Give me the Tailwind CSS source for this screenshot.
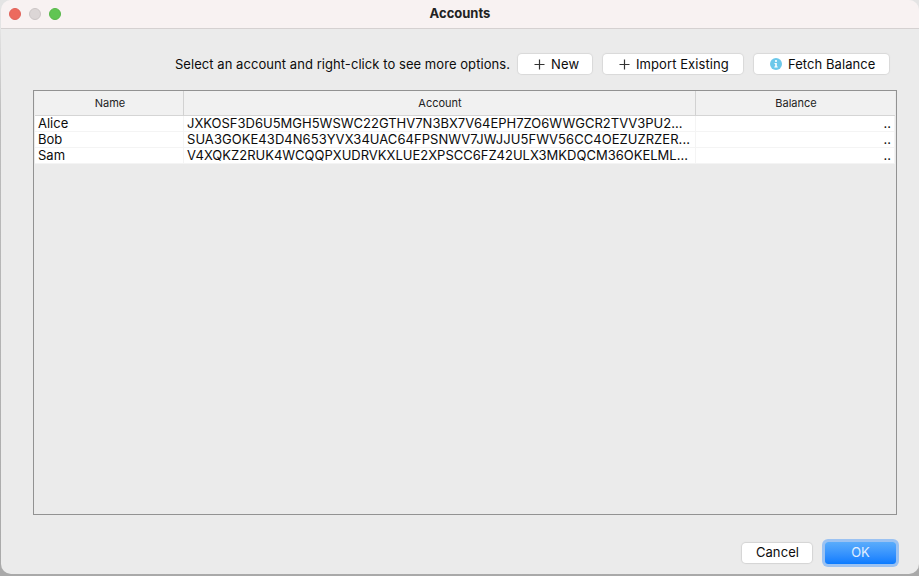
<!DOCTYPE html>
<html lang="en">
<head>
<meta charset="utf-8">
<title>Accounts</title>
<script src="https://cdn.jsdelivr.net/npm/@tailwindcss/browser@4"></script>
</head>
<body class="h-[576px] w-[919px] overflow-hidden bg-gradient-to-b from-[#e4e4e4] from-5% via-[#bdbdbd] via-20% to-[#a9a9a9] pl-px font-[Inter,sans-serif] text-[13px] text-[#0c0c0c]">
<div class="relative flex h-[574px] w-[918px] flex-col overflow-hidden rounded-[10px] bg-[#ebebeb]">
  <header class="relative flex h-[29px] shrink-0 items-center justify-center border-b border-[#d5d1d1] bg-[#f8f2f2] pb-px">
    <div class="absolute left-2 top-2 flex gap-2">
      <i class="size-3 rounded-full border border-[#e0625a] bg-[#ec6a5e]"></i>
      <i class="size-3 rounded-full border border-[#cbc5c5] bg-[#dcd6d6]"></i>
      <i class="size-3 rounded-full border border-[#57b749] bg-[#61c554]"></i>
    </div>
    <h1 class="text-[13px] font-bold text-[#222]">Accounts</h1>
  </header>
  <div class="flex h-[61px] shrink-0 items-start justify-end pr-[30px] pt-[25px] leading-5">
    <p class="mr-[8px] whitespace-nowrap tracking-[0.06px]">Select an account and right-click to see more options.</p>
    <button class="mr-[11px] flex h-5 w-[74px] items-center rounded-[4px] bg-white pl-4 whitespace-nowrap shadow-[0_0_1px_1px_#d9d9d9]">
      <svg class="mr-[6px] size-[11px]" viewBox="0 0 11 11" fill="none" stroke="#333" stroke-width="1.2"><path d="M5.5 .5v10M.5 5.5h10"/></svg><span class="tracking-[0.15px]">New</span>
    </button>
    <button class="mr-[11px] flex h-5 w-[140px] items-center rounded-[4px] bg-white pl-4 whitespace-nowrap shadow-[0_0_1px_1px_#d9d9d9]">
      <svg class="mr-[6px] size-[11px]" viewBox="0 0 11 11" fill="none" stroke="#333" stroke-width="1.2"><path d="M5.5 .5v10M.5 5.5h10"/></svg><span class="tracking-[0.08px]">Import Existing</span>
    </button>
    <button class="flex h-5 w-[135px] items-center rounded-[4px] bg-white pl-4 whitespace-nowrap shadow-[0_0_1px_1px_#d9d9d9]">
      <svg class="mr-[6px] size-3" viewBox="0 0 12 12"><circle cx="6" cy="6" r="6" fill="#6cc8ea"/><circle cx="6" cy="3" r="1.1" fill="#fff"/><path d="M4.5 5h2.3v3.5h.9v1H4.3v-1h.9V6h-.7z" fill="#fff"/></svg><span class="tracking-[0.06px]">Fetch Balance</span>
    </button>
  </div>
  <main class="ml-8 h-[425px] w-[864px] shrink-0 border border-[#929292] px-px">
    <div class="grid h-[25px] grid-cols-[149px_512px_199px] border-b border-[#d5d5d5] bg-[#f1f1f1] text-center text-[11px] leading-[25px] text-[#222]">
      <span class="border-r border-[#d2d2d2] pl-[2px]">Name</span><span class="border-r border-[#d2d2d2] pl-px">Account</span><span class="pl-px">Balance</span>
    </div>
    <div class="grid h-12 grid-cols-[149px_512px_199px] grid-rows-[16px_16px_16px] leading-[15px] whitespace-nowrap [&>span]:border-b [&>span]:border-r [&>span]:border-[#f4f4f4] [&>span]:bg-white">
      <span class="pl-[3px] tracking-[0px]">Alice</span><span class="pl-[3px] tracking-[0px]">JXKOSF3D6U5MGH5WSWC22GTHV7N3BX7V64EPH7ZO6WWGCR2TVV3PU2...</span><span class="pr-[3px] text-right leading-[14px]">..</span>
      <span class="pl-[3px] tracking-[0px]">Bob</span><span class="pl-[3px] tracking-[0.05px]">SUA3GOKE43D4N653YVX34UAC64FPSNWV7JWJJU5FWV56CC4OEZUZRZER...</span><span class="pr-[3px] text-right leading-[14px]">..</span>
      <span class="pl-[3px] tracking-[0px]">Sam</span><span class="pl-[3px] tracking-[0px]">V4XQKZ2RUK4WCQQPXUDRVKXLUE2XPSCC6FZ42ULX3MKDQCM36OKELML...</span><span class="pr-[3px] text-right leading-[14px]">..</span>
    </div>
  </main>
  <footer class="flex justify-end gap-[13px] pr-[23px] pt-[28px]">
    <button class="h-5 w-[70px] rounded-[4px] bg-white pl-px tracking-[0.1px] shadow-[0_0_1px_1px_#d4d4d4]">Cancel</button>
    <button class="-mt-px h-[22px] w-[71px] rounded-[3px] bg-gradient-to-b from-[#5aacfb] to-[#087bff] text-white/85 shadow-[0_0_0_3px_#9bc2f2]">OK</button>
  </footer>
</div>
</body>
</html>
